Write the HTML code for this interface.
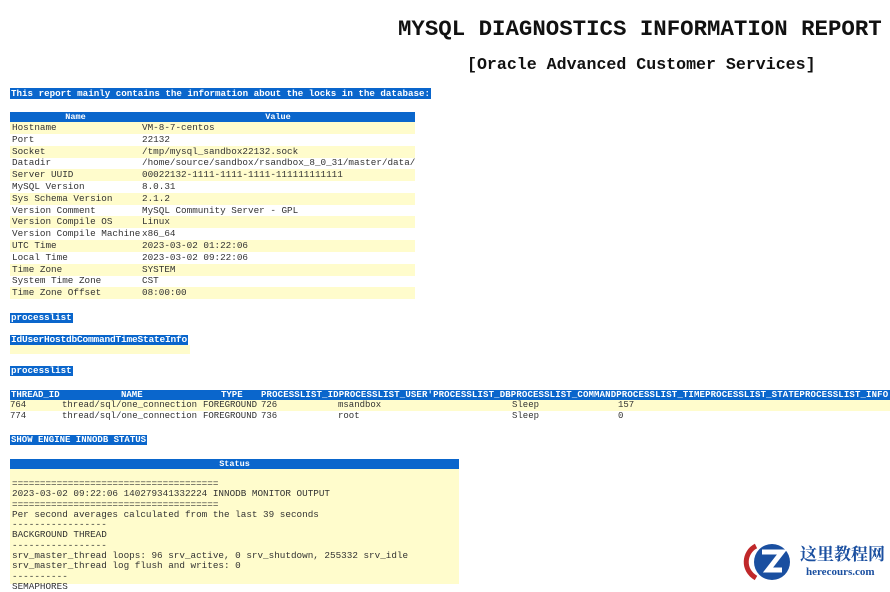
<!DOCTYPE html>
<html><head><meta charset="utf-8"><style>
*{margin:0;padding:0;box-sizing:border-box}
body{width:890px;height:584px;overflow:hidden;background:#fff;position:relative;font-family:"Liberation Mono",monospace;color:#333}
.a{position:absolute;white-space:pre}
.hl{background:#0a66cc;color:#fff;font-weight:bold;font-size:8.5px;line-height:10px;padding:0 1px}
.t{font-size:9.3px;line-height:11.8px}
.row{position:absolute;left:10px;width:405px;height:11.8px}
.y{background:#fffccc}
.th{position:absolute;background:#0a66cc;color:#fff;font-weight:bold;font-size:8.5px;line-height:10px;text-align:center}
.p{font-size:9px;line-height:11px}
</style></head><body>
<div class="a" style="left:398px;top:16px;font-size:22.4px;font-weight:bold;color:#111;line-height:26px">MYSQL DIAGNOSTICS INFORMATION REPORT</div>
<div class="a" style="left:467px;top:55px;font-size:16.6px;font-weight:bold;color:#111;line-height:20px">[Oracle Advanced Customer Services]</div>

<div class="a hl" style="left:10px;top:88px;font-size:9.2px;line-height:11px">This report mainly contains the information about the locks in the database:</div>

<div class="th" style="left:10px;top:112px;width:131px">Name</div>
<div class="th" style="left:141px;top:112px;width:274px">Value</div>
<div class="row y" style="top:122px"></div>
<div class="row y" style="top:146px"></div>
<div class="row y" style="top:169px"></div>
<div class="row y" style="top:193px"></div>
<div class="row y" style="top:216px"></div>
<div class="row y" style="top:240px"></div>
<div class="row y" style="top:264px"></div>
<div class="row y" style="top:287px"></div>
<div class="a t" style="left:12px;top:122px">Hostname
Port
Socket
Datadir
Server UUID
MySQL Version
Sys Schema Version
Version Comment
Version Compile OS
Version Compile Machine
UTC Time
Local Time
Time Zone
System Time Zone
Time Zone Offset</div>
<div class="a t" style="left:142px;top:122px">VM-8-7-centos
22132
/tmp/mysql_sandbox22132.sock
/home/source/sandbox/rsandbox_8_0_31/master/data/
00022132-1111-1111-1111-111111111111
8.0.31
2.1.2
MySQL Community Server - GPL
Linux
x86_64
2023-03-02 01:22:06
2023-03-02 09:22:06
SYSTEM
CST
08:00:00</div>

<div class="a hl" style="left:10px;top:313px;font-size:9.2px">processlist</div>
<div class="a y" style="left:10px;top:345px;width:180px;height:9px"></div>
<div class="a hl" style="left:10px;top:335px;font-size:9.5px;letter-spacing:-0.2px">IdUserHostdbCommandTimeStateInfo</div>
<div class="a hl" style="left:10px;top:366px;font-size:9.2px">processlist</div>

<div class="a" style="left:10px;top:390px;width:880px;height:10px;background:#0a66cc"></div>
<div class="a hl p" style="left:10px;top:390px;line-height:10px;background:none">THREAD_ID</div>
<div class="a hl p" style="left:120px;top:390px;line-height:10px;background:none">NAME</div>
<div class="a hl p" style="left:220px;top:390px;line-height:10px;background:none">TYPE</div>
<div class="a hl p" style="left:260px;top:390px;line-height:10px;background:none;letter-spacing:0.15px">PROCESSLIST_IDPROCESSLIST_USER'PROCESSLIST_DBPROCESSLIST_COMMANDPROCESSLIST_TIMEPROCESSLIST_STATEPROCESSLIST_INFO</div>
<div class="a y" style="left:10px;top:400px;width:880px;height:11px"></div>
<div class="a p" style="left:10px;top:400px">764</div><div class="a p" style="left:62px;top:400px">thread/sql/one_connection</div><div class="a p" style="left:203px;top:400px">FOREGROUND</div><div class="a p" style="left:261px;top:400px">726</div><div class="a p" style="left:338px;top:400px">msandbox</div><div class="a p" style="left:512px;top:400px">Sleep</div><div class="a p" style="left:618px;top:400px">157</div>
<div class="a p" style="left:10px;top:411px">774</div><div class="a p" style="left:62px;top:411px">thread/sql/one_connection</div><div class="a p" style="left:203px;top:411px">FOREGROUND</div><div class="a p" style="left:261px;top:411px">736</div><div class="a p" style="left:338px;top:411px">root</div><div class="a p" style="left:512px;top:411px">Sleep</div><div class="a p" style="left:618px;top:411px">0</div>

<div class="a hl" style="left:10px;top:435px;font-size:9px">SHOW ENGINE INNODB STATUS</div>

<div class="th" style="left:10px;top:459px;width:449px;height:10px">Status</div>
<div class="a y" style="left:10px;top:469px;width:449px;height:115px"></div>
<div class="a" style="left:12px;top:479px;font-size:9.3px;line-height:10.3px">=====================================
2023-03-02 09:22:06 140279341332224 INNODB MONITOR OUTPUT
=====================================
Per second averages calculated from the last 39 seconds
-----------------
BACKGROUND THREAD
-----------------
srv_master_thread loops: 96 srv_active, 0 srv_shutdown, 255332 srv_idle
srv_master_thread log flush and writes: 0
----------
SEMAPHORES</div>

<svg class="a" style="left:742px;top:540px" width="56" height="44" viewBox="0 0 56 44">
<path d="M14 6 C2 12 0 30 14 38" fill="none" stroke="#c0282a" stroke-width="5"/>
<circle cx="30" cy="22" r="18" fill="#1a4fa0"/>
<path d="M20 12 H40 L26 30 H40" fill="none" stroke="#fff" stroke-width="5"/>
</svg>
<div class="a" style="left:800px;top:543px;font-family:'Noto Serif CJK SC','Noto Sans CJK SC',serif;font-weight:bold;font-size:17px;color:#1a4fa0;line-height:20px">这里教程网</div>
<div class="a" style="left:806px;top:566px;font-family:'Liberation Serif',serif;font-weight:bold;font-size:11px;color:#1a4fa0">herecours.com</div>
</body></html>
